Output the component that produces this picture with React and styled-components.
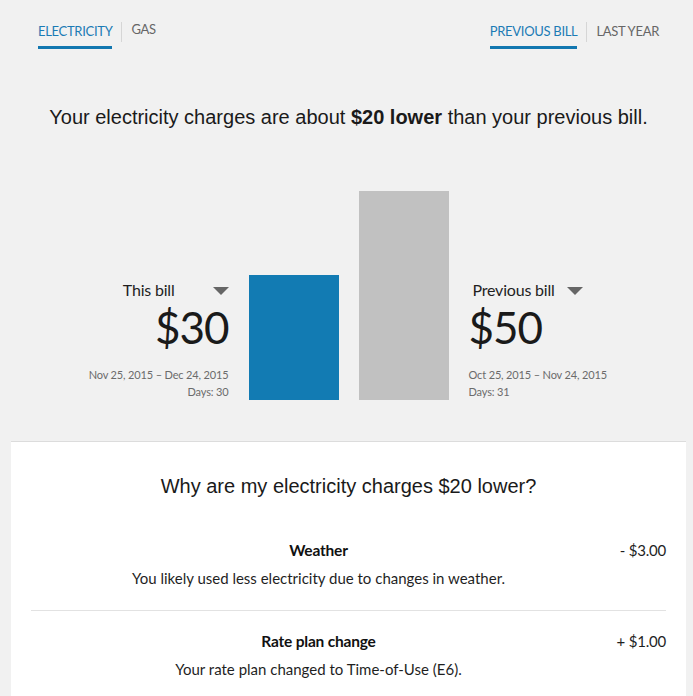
import styled, { createGlobalStyle } from "styled-components";

const GlobalStyle = createGlobalStyle`
  html, body {
    margin: 0;
    padding: 0;
    background: #f1f1f1;
  }
  body {
    font-family: "Source Sans Pro", Lato, "Noto Sans", sans-serif;
    color: #1f1f1f;
  }
`;

const Page = styled.div`
  padding: 0 7px 0 11px;
  box-sizing: border-box;
  width: 693px;
`;

const TabBar = styled.div`
  display: flex;
  justify-content: space-between;
  padding: 22px 27px 0 27px;
`;

const TabGroup = styled.div`
  display: flex;
  align-items: flex-start;
`;

const Tab = styled.div`
  font-size: 13px;
  letter-spacing: -0.3px;
  text-transform: uppercase;
  color: ${(p) => (p.$active ? "#1b7bb5" : "#666")};
  padding-bottom: 6px;
  border-bottom: 3px solid ${(p) => (p.$active ? "#1277b0" : "transparent")};
  line-height: 18px;
  margin-top: ${(p) => (p.$raise ? "-2px" : "0")};
`;

const TabDivider = styled.div`
  width: 1px;
  height: 20px;
  background: #d6d6d6;
  margin: 0 9px;
`;

const Headline = styled.h1`
  margin: 56px 0 0 0;
  text-align: center;
  font-family: "Liberation Sans", Arial, sans-serif;
  font-weight: normal;
  font-size: 20px;
  line-height: 24px;
  color: #1a1a1a;
  strong {
    font-weight: bold;
  }
`;

const Chart = styled.div`
  display: flex;
  justify-content: center;
  align-items: flex-end;
  gap: 20px;
  margin-top: 62px;
  height: 209px;
`;

const Side = styled.div`
  width: 137px;
  display: flex;
  flex-direction: column;
  align-items: ${(p) => (p.$right ? "flex-start" : "flex-end")};
  text-align: ${(p) => (p.$right ? "left" : "right")};
  white-space: nowrap;
`;

const LabelRow = styled.div`
  display: flex;
  align-items: center;
  gap: ${(p) => p.$gap}px;
  font-size: 16px;
  letter-spacing: -0.2px;
  color: #1f1f1f;
  line-height: 20px;
  padding-left: ${(p) => p.$indent || 0}px;
`;

const Caret = styled.span`
  width: 0;
  height: 0;
  border-left: 8px solid transparent;
  border-right: 8px solid transparent;
  border-top: 8px solid #666;
  margin-top: 2px;
`;

const Amount = styled.div`
  font-size: 44px;
  line-height: 46px;
  color: #1a1a1a;
  margin-top: 4px;
  letter-spacing: -1px;
`;

const Dates = styled.div`
  margin-top: 16px;
  display: flex;
  flex-direction: column;
`;

const Meta = styled.div`
  font-size: 11px;
  color: #6b6b6b;
  line-height: 17px;
  letter-spacing: -0.15px;
`;

const Bar = styled.div`
  width: 90px;
  background: ${(p) => p.$color};
`;

const Card = styled.div`
  background: #fff;
  margin-top: 41px;
  border-top: 1px solid #dcdcdc;
  padding: 0 20px 40px 20px;
`;

const CardTitle = styled.h2`
  margin: 0;
  padding-top: 31px;
  text-align: center;
  font-family: "Liberation Sans", Arial, sans-serif;
  font-weight: normal;
  font-size: 20px;
  line-height: 26px;
  color: #1a1a1a;
`;

const Reasons = styled.div`
  margin-top: 41px;
`;

const Reason = styled.div`
  display: flex;
  align-items: flex-start;
  padding: ${(p) => (p.$first ? "0" : "20px")} 0 22px 0;
  border-bottom: ${(p) => (p.$last ? "none" : "1px solid #e2e2e2")};
`;

const ReasonText = styled.div`
  flex: 1;
  text-align: center;
`;

const ReasonTitle = styled.div`
  font-weight: bold;
  font-size: 15.5px;
  line-height: 20px;
  letter-spacing: -0.2px;
  color: #111;
`;

const ReasonDesc = styled.div`
  margin-top: 8px;
  font-size: 15px;
  line-height: 20px;
  color: #1f1f1f;
`;

const ReasonAmount = styled.div`
  width: 60px;
  text-align: right;
  font-size: 15px;
  line-height: 20px;
  letter-spacing: -0.2px;
  color: #1f1f1f;
`;

const reasons = [
  {
    title: "Weather",
    desc: "You likely used less electricity due to changes in weather.",
    amount: "- $3.00",
  },
  {
    title: "Rate plan change",
    desc: "Your rate plan changed to Time-of-Use (E6).",
    amount: "+ $1.00",
  },
];

export default function App() {
  return (
    <>
      <GlobalStyle />
      <Page>
        <TabBar>
          <TabGroup>
            <Tab $active>Electricity</Tab>
            <TabDivider />
            <Tab $raise>Gas</Tab>
          </TabGroup>
          <TabGroup>
            <Tab $active>Previous bill</Tab>
            <TabDivider />
            <Tab>Last year</Tab>
          </TabGroup>
        </TabBar>

        <Headline>
          Your electricity charges are about <strong>$20 lower</strong> than
          your previous bill.
        </Headline>

        <Chart>
          <Side>
            <LabelRow $gap={38}>
              This bill <Caret />
            </LabelRow>
            <Amount>$30</Amount>
            <Dates>
              <Meta>Nov 25, 2015 – Dec 24, 2015</Meta>
              <Meta>Days: 30</Meta>
            </Dates>
          </Side>
          <Bar $color="#127bb3" style={{ height: "125px" }} />
          <Bar $color="#c1c1c1" style={{ height: "209px" }} />
          <Side $right>
            <LabelRow $gap={12} $indent={4}>
              Previous bill <Caret />
            </LabelRow>
            <Amount>$50</Amount>
            <Dates>
              <Meta>Oct 25, 2015 – Nov 24, 2015</Meta>
              <Meta>Days: 31</Meta>
            </Dates>
          </Side>
        </Chart>

        <Card>
          <CardTitle>Why are my electricity charges $20 lower?</CardTitle>
          <Reasons>
            {reasons.map((r, i) => (
              <Reason key={r.title} $first={i === 0} $last={i === reasons.length - 1}>
                <ReasonText>
                  <ReasonTitle>{r.title}</ReasonTitle>
                  <ReasonDesc>{r.desc}</ReasonDesc>
                </ReasonText>
                <ReasonAmount>{r.amount}</ReasonAmount>
              </Reason>
            ))}
          </Reasons>
        </Card>
      </Page>
    </>
  );
}
